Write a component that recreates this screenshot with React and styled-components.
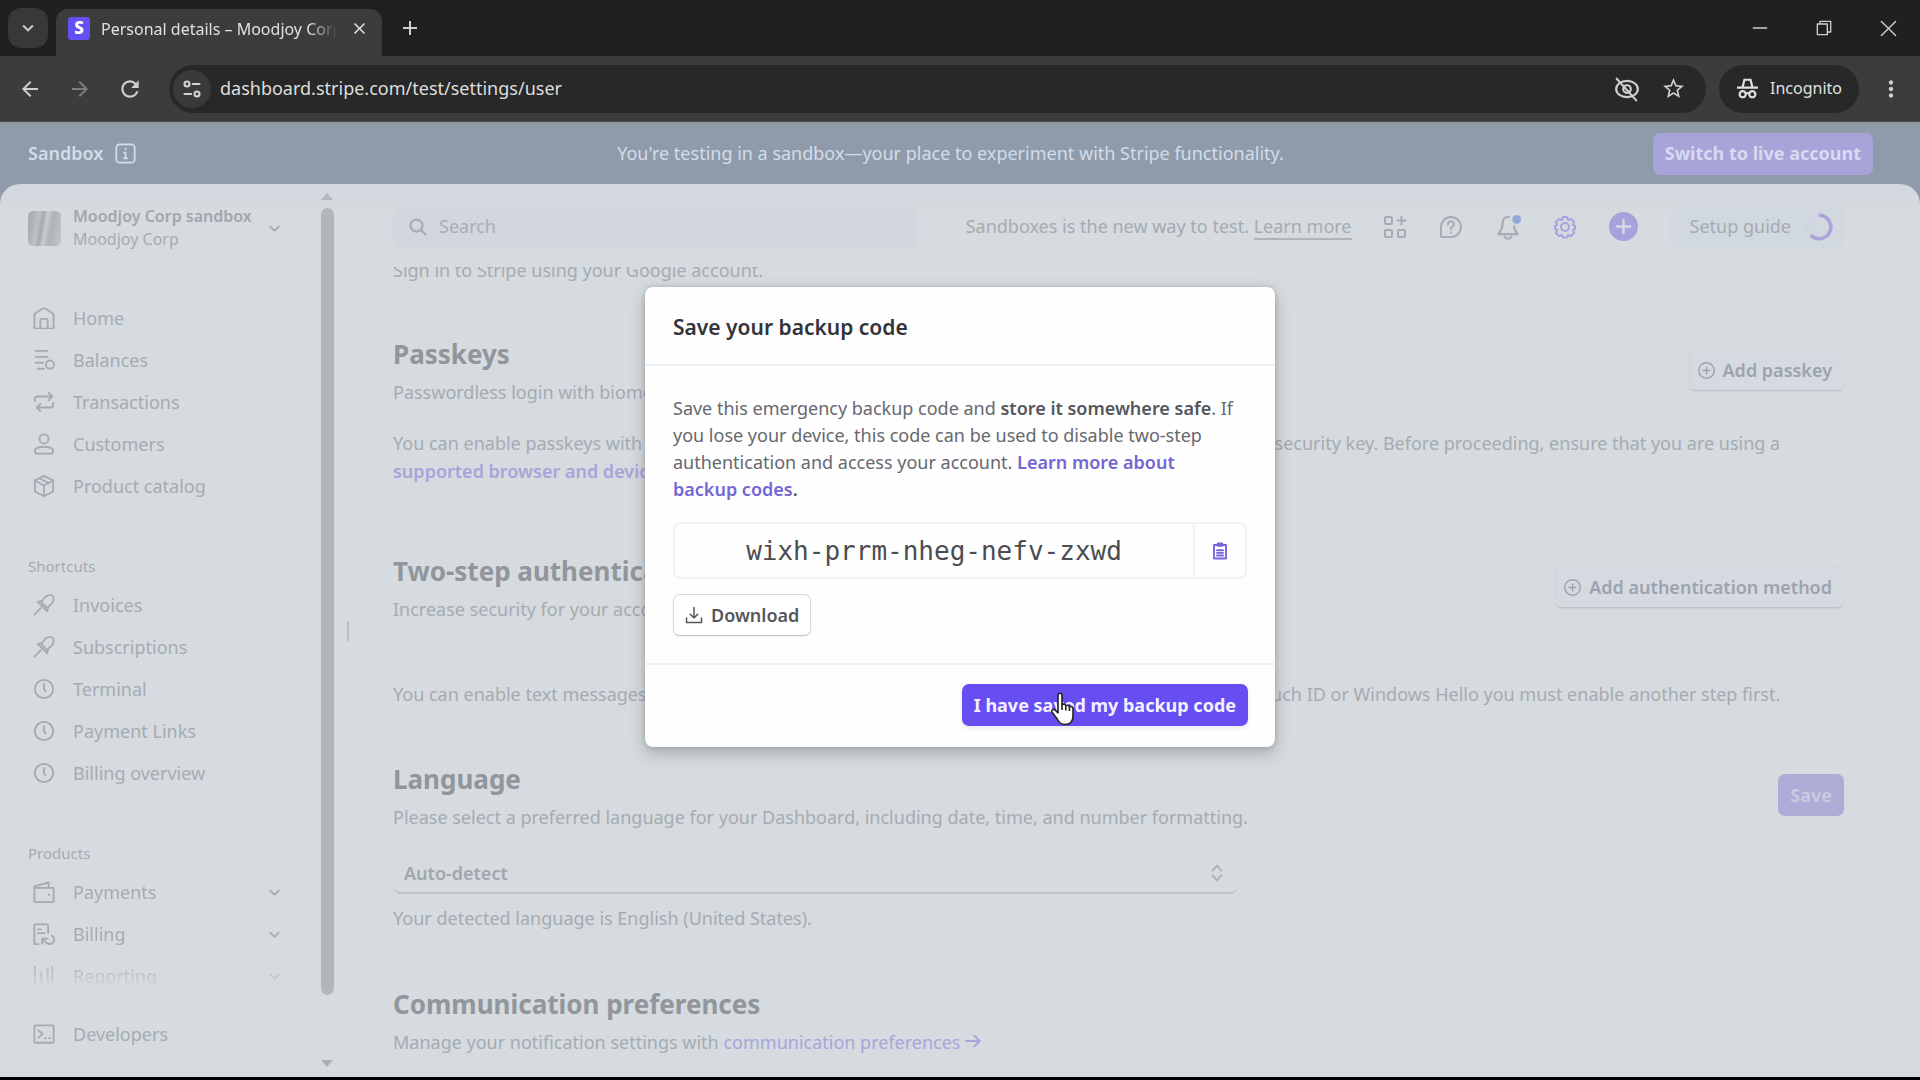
import React, { useState } from 'react';
import styled, { createGlobalStyle } from 'styled-components';
import { MdArrowBack, MdArrowForward, MdRefresh, MdStarBorder, MdMoreVert, MdAdd, MdClose, MdExpandMore } from 'react-icons/md';

// STYLES
const GlobalStyle = createGlobalStyle`
  * { box-sizing: border-box; }
  body {
    margin: 0;
    background: #000;
    font-family: "Noto Sans", "Open Sans", sans-serif;
    font-size: 18px;
    line-height: 27px;
    color: #a5abb3;
  }
  button, input, select { font: inherit; color: inherit; }
  button { cursor: pointer; }
  h1, h2, p, ul { margin: 0; padding: 0; }
  a { color: inherit; text-decoration: none; }
`;
const Window = styled.div`
  display: flex;
  flex-direction: column;
  height: 100vh;
  padding-bottom: 3px;
`;

const TabStrip = styled.div`
  display: flex;
  align-items: center;
  height: 56px;
  padding: 0 8px;
  background: #202020;
  color: #e0e0e0;
`;
const ChromeButton = styled.button`
  display: flex;
  align-items: center;
  justify-content: center;
  width: ${props => props.$width || 40}px;
  height: 40px;
  flex: none;
  padding: 0;
  border: 0;
  border-radius: 13px;
  background: ${props => props.$filled ? '#383838' : 'none'};
  color: ${props => props.$dim ? '#7e7e7e' : '#cfcfcf'};
`;
const Tab = styled.div`
  display: flex;
  align-items: center;
  align-self: flex-end;
  width: 326px;
  height: 47px;
  margin-left: 8px;
  padding: 0 13px 8px 12px;
  border-radius: 12px 12px 0 0;
  background: #3c3c3c;
`;
const Favicon = styled.span`
  width: 22px;
  height: 23px;
  flex: none;
  border-radius: 3px;
  background: #6350f3;
  color: #fff;
  font-size: 17px;
  font-weight: 800;
  line-height: 22px;
  text-align: center;
`;
const TabTitle = styled.span`
  flex: 1;
  margin: 0 13px 0 11px;
  overflow: hidden;
  font-size: 16px;
  line-height: 24px;
  white-space: nowrap;
  mask-image: linear-gradient(to right, #000 88%, transparent);
`;
const WindowControls = styled.div`
  display: flex;
  gap: 24px;
  margin-left: auto;
  margin-right: 4px;
`;

const Toolbar = styled.div`
  display: flex;
  align-items: center;
  height: 66px;
  flex: none;
  padding: 0 9px 0 10px;
  background: #3c3c3c;
  border-bottom: 1px solid #4c5050;
`;
const NavButtons = styled.div`
  display: flex;
  gap: 10px;
  margin-right: 19px;
`;
const AddressBar = styled.div`
  display: flex;
  align-items: center;
  flex: 1;
  height: 48px;
  padding: 0 13px 0 4px;
  border-radius: 24px;
  background: #282828;
  color: #d4d4d4;
`;
const SiteInfo = styled.button`
  display: flex;
  align-items: center;
  justify-content: center;
  width: 38px;
  height: 38px;
  padding: 0;
  border: 0;
  border-radius: 50%;
  background: #3a3a3a;
`;
const AddressInput = styled.input`
  flex: 1;
  margin-left: 9px;
  padding: 0;
  border: 0;
  outline: 0;
  background: none;
  color: #dedede;
`;
const Incognito = styled.div`
  display: flex;
  align-items: center;
  gap: 12px;
  height: 48px;
  margin: 0 12px 0 13px;
  padding: 0 17px 0 18px;
  border-radius: 24px;
  background: #282828;
  color: #e0e0e0;
  font-size: 16px;
`;

const Page = styled.div`
  position: relative;
  display: flex;
  flex-direction: column;
  flex: 1;
  min-height: 0;
  background: #8f9bab;
`;
const Banner = styled.div`
  display: grid;
  grid-template-columns: 1fr auto 1fr;
  align-items: center;
  height: 62px;
  flex: none;
  padding: 0 47px 2px 28px;
  border-top: 3px solid #909a9e;
  color: #d2dde8;
`;
const BannerLabel = styled.div`
  display: flex;
  align-items: center;
  gap: 12px;
  font-weight: 600;
`;
const BannerText = styled.p``;
const SolidButton = styled.button`
  position: relative;
  justify-self: end;
  height: 42px;
  padding: 0 12px;
  border: 0;
  border-radius: 7px;
  background: ${props => props.$active ? '#664ef2' : props.$faint ? '#adacd6' : '#a7a4da'};
  color: ${props => props.$active ? '#f3f0ff' : props.$faint ? '#c8cae0' : '#d8daf0'};
  font-weight: 700;
  box-shadow: ${props => props.$active ? '0 2px 4px rgba(60, 60, 110, .12)' : 'none'};
`;
const Panel = styled.div`
  display: flex;
  flex: 1;
  min-height: 0;
  border-radius: 20px 20px 0 0;
  background: linear-gradient(#d2d7e0, #d5dbde 28px);
`;

const Sidebar = styled.nav`
  display: flex;
  flex-direction: column;
  width: 320px;
  flex: none;
  padding: 21px 28px 0;
`;
const Account = styled.button`
  display: flex;
  align-items: center;
  gap: 12px;
  width: 252px;
  margin-bottom: 46px;
  padding: 0;
  border: 0;
  background: none;
  text-align: left;
`;
const AccountLogo = styled.span`
  width: 33px;
  height: 35px;
  border-radius: 5px;
  background: linear-gradient(100deg, #a9afb2 12%, #bcc2c5 30%, #a4aaad 42%, #c6cccf 52%, #adb3b6 68%, #c1c7ca);
`;
const AccountText = styled.span`
  flex: 1;
  font-size: 16px;
  line-height: 23px;
  white-space: nowrap;
  b { display: block; font-weight: 600; color: #a1a7ad; }
`;
const NavList = styled.ul`
  list-style: none;
  margin-bottom: ${props => props.$gap || 0}px;
  mask-image: ${props => props.$fade ? 'linear-gradient(#000 68%, transparent 94%)' : 'none'};
`;
const NavLink = styled.a`
  display: flex;
  align-items: center;
  gap: 18px;
  height: 42px;
  padding-left: 5px;
  span { flex: 1; }
  svg:last-child { margin-right: 12px; }
`;
const NavTitle = styled.h2`
  margin-bottom: 7px;
  font-size: 15px;
  font-weight: 400;
  line-height: 22px;
`;
const ScrollTrack = styled.div`
  display: flex;
  flex-direction: column;
  align-items: center;
  gap: 8px;
  width: 14px;
  padding: 9px 0 10px;
`;
const ScrollThumb = styled.div`
  width: 13px;
  height: 787px;
  border-radius: 7px;
  background: #b0b6b9;
`;
const ScrollSpace = styled.div`
  flex: 1;
`;
const Arrow = styled.span`
  border: 6px solid transparent;
  border-top: ${props => props.$up ? '0' : '7px solid #a9afb2'};
  border-bottom: ${props => props.$up ? '7px solid #b3b9bc' : '0'};
`;
const ResizeHandle = styled.div`
  align-self: center;
  width: 2px;
  height: 20px;
  margin: 0 44px 0 13px;
  background: #bbc1c5;
`;

const Main = styled.main`
  display: flex;
  flex-direction: column;
  flex: 1;
  min-width: 0;
  padding-right: 76px;
`;
const Header = styled.header`
  display: flex;
  align-items: center;
  height: 83px;
  flex: none;
  padding-top: 2px;
`;
const Search = styled.label`
  display: flex;
  align-items: center;
  gap: 12px;
  width: 524px;
  height: 42px;
  padding: 0 16px;
  border-radius: 8px;
  background: #d1d6df;
  input {
    flex: 1;
    padding: 0;
    border: 0;
    outline: 0;
    background: none;
    &::placeholder { color: #a9aeba; opacity: 1; }
  }
`;
const HeaderNote = styled.p`
  margin: 0 31px 0 auto;
  white-space: nowrap;
  a { border-bottom: 2px solid #adb3ba; }
`;
const HeaderIcons = styled.div`
  display: flex;
  gap: 32px;
  align-items: center;
`;
const IconButton = styled.button`
  display: flex;
  padding: 0;
  border: 0;
  background: none;
  color: ${props => props.$purple ? '#a7a2dc' : '#a6abb5'};
`;
const SetupButton = styled.button`
  display: flex;
  align-items: center;
  gap: 14px;
  height: 42px;
  margin-left: 32px;
  padding: 0 11px 0 20px;
  border: 0;
  border-radius: 8px;
  background: #d2d8df;
`;

const Content = styled.div`
  flex: 1;
  min-height: 0;
  overflow: hidden;
  line-height: 28px;
`;
const Intro = styled.p`
  margin-top: -11px;
  margin-bottom: 54px;
`;
const Section = styled.section`
  margin-bottom: ${props => props.$gap}px;
`;
const SectionHead = styled.div`
  display: flex;
  align-items: flex-start;
  justify-content: space-between;
  padding-bottom: ${props => props.$space}px;
  h2 {
    margin-bottom: 8px;
    color: #90969c;
    font-size: 26px;
    font-weight: 700;
    line-height: 32px;
  }
`;
const OutlineButton = styled.button`
  display: flex;
  align-items: center;
  gap: 8px;
  height: 42px;
  padding: 0 11px 0 ${props => props.$left || 8}px;
  border: 1px solid ${props => props.$bright ? '#d8dade' : '#d1d7dc'};
  border-bottom-color: ${props => props.$bright ? '#c4c6ca' : '#bdc3ca'};
  border-radius: 7px;
  background: ${props => props.$bright ? '#fff' : '#d5dae1'};
  color: ${props => props.$bright ? '#55565c' : '#9da3ae'};
  font-weight: 600;
  box-shadow: 0 1px 2px rgba(60, 66, 87, .08);
`;
const ButtonSlot = styled.div`
  padding-top: 11px;
`;
const PurpleLink = styled.a`
  color: ${props => props.$bright ? '#7466d4' : '#a9a4da'};
  font-weight: ${props => props.$light ? 400 : 600};
`;
const NoBreak = styled.span`
  white-space: nowrap;
`;
const SelectBox = styled.div`
  display: flex;
  align-items: center;
  width: 845px;
  height: 40px;
  margin-bottom: 10px;
  padding-right: 12px;
  border-bottom: 2px solid #bfc5c9;
  border-radius: 8px;
  select {
    flex: 1;
    height: 38px;
    padding: 0 11px;
    border: 0;
    appearance: none;
    background: none;
    font-weight: 600;
    color: #a0a6ad;
  }
`;

const Overlay = styled.div`
  position: absolute;
  inset: 0;
  display: flex;
  align-items: flex-start;
  justify-content: center;
  padding-top: 165px;
`;
const Modal = styled.div`
  width: 630px;
  border-radius: 8px;
  background: #fefefe;
  color: #66686e;
  box-shadow: 0 6px 16px rgba(50, 55, 65, .3), 0 0 4px rgba(50, 55, 65, .2);
`;
const ModalHeader = styled.div`
  padding: 26px 28px 23px;
  border-bottom: 2px solid #f0f1f2;
  h1 { color: #34353a; font-size: 21px; font-weight: 600; line-height: 28px; }
`;
const ModalBody = styled.div`
  padding: 29px 28px 27px;
  strong { font-weight: 600; color: #55575d; }
`;
const CodeBox = styled.div`
  display: flex;
  height: 57px;
  margin: 19px 0 15px;
  border: 2px solid #f1f2f3;
  border-radius: 7px;
  code {
    flex: 1;
    color: #4b4c50;
    font-family: "DejaVu Sans Mono", "Liberation Mono", monospace;
    font-size: 26px;
    line-height: 55px;
    text-align: center;
  }
  button {
    display: flex;
    align-items: center;
    justify-content: center;
    width: 52px;
    padding: 0;
    border: 0;
    border-left: 2px solid #f3f4f5;
    background: none;
    color: #7765e0;
  }
`;
const ModalFooter = styled.div`
  display: flex;
  justify-content: flex-end;
  padding: 19px 27px 21px;
  border-top: 2px solid #f0f1f2;
`;
const Pointer = styled.svg`
  position: absolute;
  left: 88px;
  top: 8px;
`;
const StrokeSvg = styled.svg`
  flex: none;
  fill: none;
  stroke: currentColor;
  stroke-linecap: round;
  stroke-linejoin: round;
`;

const Icon = ({ size = 22, stroke = 2, children }) => (
  <StrokeSvg width={size} height={size} viewBox="0 0 24 24" strokeWidth={stroke} aria-hidden="true">{children}</StrokeSvg>
);

// ICONS
const chevron = <path d="m3 8 9 9 9-9" />;
const icons = {
  home: <><path d="M1.500 9q0-1.500 1.500-2.500l7-4.500q2-1 4 0l7 4.500Q22.500 7.500 22.500 9v13a1.500 1.500 0 0 1-1.500 1.500H3A1.500 1.500 0 0 1 1.500 22z" /><path d="M8 23v-8.500A1.500 1.500 0 0 1 9.500 13h5a1.500 1.500 0 0 1 1.500 1.500V23" /></>,
  balances: <><path d="M3 2h13M3 8.500h13M3 15h8M5 21.500h7" /><circle cx="18.500" cy="17" r="4.500" /></>,
  transfer: <><path d="M2 11V9a3 3 0 0 1 3-3h16M17 2l4 4-4 4M22 13v2a3 3 0 0 1-3 3H4M8 14l-4 4 4 4" /></>,
  user: <><circle cx="12" cy="6.500" r="5" /><path d="M2 20c0-3 4-5 10-5s10 2 10 5c0 1.500-1 2.500-2.500 2.500h-15C3 22.500 2 21.500 2 20z" /></>,
  box: <><path d="m12 1 10 5v12l-10 5-10-5V6z" /><path d="m2 6 10 5.500L22 6M12 11.500V23M7 3.500l10 5.500" /></>,
  pin: <><path d="m1.500 22.500 7-7M5 8.500 15.500 19l1-5 4.500-4c1.500-2.500 2-6.500.5-8S16 1.500 13.500 3L10 7.500zM9 9l6 6" /></>,
  clock: <><circle cx="12" cy="12" r="10" /><path d="M12 6.500V12l1.500 2.500" /></>,
  wallet: <><path d="M1.500 7.500h21V22a1 1 0 0 1-1 1h-19a1 1 0 0 1-1-1zM1.500 7.500V6L17 1.500V7" /><path d="M17.500 14.500v.8" /></>,
  billing: <><path d="M6 23H1.500V3a1.500 1.500 0 0 1 1.500-1.500h12A1.500 1.500 0 0 1 16.500 3v8M5.500 7h3M5.500 11h7M10 22.500V17h6M10 17.500l5 4.500c4 2 8 .5 8-4 0-2-1-3.500-2.500-4" /></>,
  chart: <><path d="M2 2v20M9 8v10M16 4v14M21 2v16" /></>,
  terminal: <><rect x="1.500" y="2.500" width="21" height="19" rx="1" /><path d="m6 8 4.500 4L6 16M13 16.500h1M17.500 16.500h1" /></>,
  addCircle: <><circle cx="12" cy="12" r="11" /><path d="M12 7v10M7 12h10" /></>,
};

const mainLinks = [['home', 'Home'], ['balances', 'Balances'], ['transfer', 'Transactions'], ['user', 'Customers'], ['box', 'Product catalog']];
const shortcuts = [['pin', 'Invoices'], ['pin', 'Subscriptions'], ['clock', 'Terminal'], ['clock', 'Payment Links'], ['clock', 'Billing overview']];
const products = [['wallet', 'Payments'], ['billing', 'Billing'], ['chart', 'Reporting']];

function NavItems({ items, gap, fade, expandable }) {
  return (
    <NavList $gap={gap} $fade={fade}>
      {items.map(([icon, label]) => (
        <li key={label}>
          <NavLink href="#">
            <Icon>{icons[icon]}</Icon>
            <span>{label}</span>
            {expandable ? <Icon size={11} stroke={4}>{chevron}</Icon> : null}
          </NavLink>
        </li>
      ))}
    </NavList>
  );
}

function Browser() {
  const [url, setUrl] = useState('dashboard.stripe.com/test/settings/user');
  return (
    <>
      <TabStrip>
        <ChromeButton $filled aria-label="Search tabs"><MdExpandMore size={22} /></ChromeButton>
        <Tab>
          <Favicon>S</Favicon>
          <TabTitle>Personal details – Moodjoy Corp</TabTitle>
          <MdClose size={19} />
        </Tab>
        <ChromeButton $width={56} aria-label="New tab"><MdAdd size={24} /></ChromeButton>
        <WindowControls>
          <ChromeButton aria-label="Minimize"><Icon size={16}><path d="M2 12h20" /></Icon></ChromeButton>
          <ChromeButton aria-label="Restore"><Icon size={16}><path d="M2 6h15v16H2zM6 6V2h16v16h-5" /></Icon></ChromeButton>
          <ChromeButton aria-label="Close"><Icon size={17}><path d="m2 2 20 20M22 2 2 22" /></Icon></ChromeButton>
        </WindowControls>
      </TabStrip>
      <Toolbar>
        <NavButtons>
          <ChromeButton aria-label="Back"><MdArrowBack size={24} /></ChromeButton>
          <ChromeButton $dim aria-label="Forward"><MdArrowForward size={24} /></ChromeButton>
          <ChromeButton aria-label="Reload"><MdRefresh size={26} /></ChromeButton>
        </NavButtons>
        <AddressBar>
          <SiteInfo aria-label="Site information">
            <Icon size={20} stroke={2.5}><circle cx="6" cy="6" r="3" /><path d="M13 6h8M3 18h8" /><circle cx="18" cy="18" r="3" /></Icon>
          </SiteInfo>
          <AddressInput aria-label="Address" value={url} onChange={(e) => setUrl(e.target.value)} />
          <ChromeButton $width={52} aria-label="Third-party cookies blocked">
            <Icon size={26} stroke={2}><ellipse cx="12" cy="12" rx="10" ry="7.500" /><circle cx="12" cy="12" r="3.500" /><path d="M2.500 2.500l18 20" /></Icon>
          </ChromeButton>
          <ChromeButton aria-label="Bookmark"><MdStarBorder size={25} /></ChromeButton>
        </AddressBar>
        <Incognito>
          <svg width="21" height="21" viewBox="0 0 24 24" fill="none" stroke="currentColor" strokeWidth="2.500" aria-hidden="true">
            <path d="M6.500 10 8.500 2h7l2 8M0 11h24" /><circle cx="6.500" cy="18.500" r="3.500" /><circle cx="17.500" cy="18.500" r="3.500" /><path d="M10 18c1-1 3-1 4 0" />
          </svg>
          Incognito
        </Incognito>
        <ChromeButton aria-label="Menu"><MdMoreVert size={26} /></ChromeButton>
      </Toolbar>
    </>
  );
}

function App() {
  return (
    <Window>
      <GlobalStyle />
      <Browser />
      <Page>
        <Banner>
          <BannerLabel>
            Sandbox
            <Icon size={21}><rect x="1.500" y="1.500" width="21" height="21" rx="4" /><path d="M12 6.500v.5M10.500 11H12v6M10 17.500h4" /></Icon>
          </BannerLabel>
          <BannerText>You're testing in a sandbox—your place to experiment with Stripe functionality.</BannerText>
          <SolidButton>Switch to live account</SolidButton>
        </Banner>
        <Panel>
          <Sidebar>
            <Account>
              <AccountLogo />
              <AccountText><b>Moodjoy Corp sandbox</b>Moodjoy Corp</AccountText>
              <Icon size={11} stroke={4}>{chevron}</Icon>
            </Account>
            <NavItems items={mainLinks} gap={48} />
            <NavTitle>Shortcuts</NavTitle>
            <NavItems items={shortcuts} gap={48} />
            <NavTitle>Products</NavTitle>
            <NavItems items={products} gap={16} fade expandable />
            <NavItems items={[['terminal', 'Developers']]} />
          </Sidebar>
          <ScrollTrack>
            <Arrow $up />
            <ScrollThumb />
            <ScrollSpace />
            <Arrow />
          </ScrollTrack>
          <ResizeHandle />
          <Main>
            <Header>
              <Search>
                <Icon size={18} stroke={3}><circle cx="10" cy="10" r="8" /><path d="m16 16 6 6" /></Icon>
                <input aria-label="Search" placeholder="Search" />
              </Search>
              <HeaderNote>Sandboxes is the new way to test. <a href="#">Learn more</a></HeaderNote>
              <HeaderIcons>
                <IconButton aria-label="Apps"><Icon size={24}><rect x="2" y="2" width="7" height="7" rx="1" /><rect x="2" y="15" width="7" height="7" rx="1" /><rect x="15" y="15" width="7" height="7" rx="1" /><path d="M18.500 1.500v8M14.500 5.500h8" /></Icon></IconButton>
                <IconButton aria-label="Help"><Icon size={24}><path d="M2 22V12a10 10 0 1 1 10 10z" /><path d="M9 9.500c0-4 6-4 6-.5 0 2-3 2.500-3 5M12 17.500v.2" /></Icon></IconButton>
                <IconButton aria-label="Notifications"><Icon size={26}><path d="M13 2.500c-4 0-6 2.500-6 6.500 0 4-1 6-4 9.500h18c-2-2.500-3-4-3.500-7M9 21c1.500 2.500 4.500 2.500 6 0" /><circle cx="20" cy="5" r="4" fill="#8fa9d8" stroke="none" /></Icon></IconButton>
                <IconButton $purple aria-label="Settings"><Icon size={24}><path d="M10 2h4l1 3 3-1 3 3-1 3 2 1v3l-2 1 1 3-3 3-3-1-1 2.500h-4L9 20l-3 1-3-3 1-3-2-1v-3l2-1-1-3 3-3 3 1z" /><circle cx="12" cy="12" r="4" /></Icon></IconButton>
                <IconButton $purple aria-label="Create">
                  <svg width="29" height="29" viewBox="0 0 24 24" aria-hidden="true"><circle cx="12" cy="12" r="12" fill="currentColor" /><path d="M12 6.500v11M6.500 12h11" stroke="#d5dae8" strokeWidth="2" strokeLinecap="round" /></svg>
                </IconButton>
              </HeaderIcons>
              <SetupButton>
                Setup guide
                <Icon size={28} stroke={3}><circle cx="12" cy="12" r="10" stroke="#cfd4e0" /><path d="M12 2a10 10 0 1 1-7 17" stroke="#a9a5dc" strokeLinecap="butt" /></Icon>
              </SetupButton>
            </Header>
            <Content>
              <Intro>Sign in to Stripe using your Google account.</Intro>
              <Section $gap={70}>
                <SectionHead $space={23}>
                  <div>
                    <h2>Passkeys</h2>
                    <p>Passwordless login with biometrics or security keys.</p>
                  </div>
                  <ButtonSlot>
                    <OutlineButton><Icon size={17}>{icons.addCircle}</Icon>Add passkey</OutlineButton>
                  </ButtonSlot>
                </SectionHead>
                <p>
                  You can enable passkeys with your fingerprint, face recognition, a screen lock on a phone or a hardware security key. Before proceeding, ensure that you are using a <PurpleLink href="#">supported browser and device</PurpleLink>.
                </p>
              </Section>
              <Section $gap={55}>
                <SectionHead $space={57}>
                  <div>
                    <h2>Two-step authentication</h2>
                    <p>Increase security for your account by using multiple methods.</p>
                  </div>
                  <ButtonSlot>
                    <OutlineButton><Icon size={17}>{icons.addCircle}</Icon>Add authentication method</OutlineButton>
                  </ButtonSlot>
                </SectionHead>
                <p>You can enable text messages or authenticator apps for your two-step methods. To use security keys, Touch ID or Windows Hello you must enable another step first.</p>
              </Section>
              <Section $gap={56}>
                <SectionHead $space={23}>
                  <div>
                    <h2>Language</h2>
                    <p>Please select a preferred language for your Dashboard, including date, time, and number formatting.</p>
                  </div>
                  <ButtonSlot><SolidButton $faint>Save</SolidButton></ButtonSlot>
                </SectionHead>
                <SelectBox>
                  <select aria-label="Language"><option>Auto-detect</option></select>
                  <Icon size={18}><path d="m6 9 6-7 6 7M6 15l6 7 6-7" /></Icon>
                </SelectBox>
                <p>Your detected language is English (United States).</p>
              </Section>
              <Section $gap={0}>
                <SectionHead $space={0}>
                  <div>
                    <h2>Communication preferences</h2>
                    <p>Manage your notification settings with <PurpleLink $light href="#">communication preferences <Icon size={16} stroke={3}><path d="M2 12h20M14 4l8 8-8 8" /></Icon></PurpleLink></p>
                  </div>
                </SectionHead>
              </Section>
            </Content>
          </Main>
        </Panel>
        <Overlay>
          <Modal role="dialog" aria-labelledby="backup-title">
            <ModalHeader><h1 id="backup-title">Save your backup code</h1></ModalHeader>
            <ModalBody>
              <p>
                Save this emergency backup code and <strong>store it somewhere safe</strong>. If you lose your device, this code can be used to disable two-step authentication and access your account. <PurpleLink $bright href="#">Learn more about <NoBreak>backup codes</NoBreak></PurpleLink><strong>.</strong>
              </p>
              <CodeBox>
                <code>wixh-prrm-nheg-nefv-zxwd</code>
                <button aria-label="Copy code">
                  <Icon size={18} stroke={2.5}><path d="M4 4h16v18H4z" /><path d="M9 5V2h6v3zM8 11h8M8 14.500h8M8 18h8" /></Icon>
                </button>
              </CodeBox>
              <OutlineButton $bright $left={11}><Icon size={18} stroke={2}><path d="M12 2v14M7 11l5 5 5-5M2 16v6h20v-6" /></Icon>Download</OutlineButton>
            </ModalBody>
            <ModalFooter>
              <SolidButton $active>
                I have saved my backup code
                <Pointer width="26" height="34" viewBox="0 0 26 34" fill="#fff" stroke="#222" strokeWidth="1.600" strokeLinejoin="round" aria-hidden="true">
                  <path d="M8 21V3.500c0-3 4-3 4 0V13c1-1.500 3.500-1 3.800.8 1-1 3.200-.6 3.600 1 1.600-.8 3.600 0 3.600 2V24c0 5-2.500 8.500-8 8.500-4 0-6-2-7.500-5L2 20c-1-2 1.500-3.500 3-2z" />
                  <path d="M12 13v5M15.800 14v4.500M19.400 15v4" />
                </Pointer>
              </SolidButton>
            </ModalFooter>
          </Modal>
        </Overlay>
      </Page>
    </Window>
  );
}

export default App;
